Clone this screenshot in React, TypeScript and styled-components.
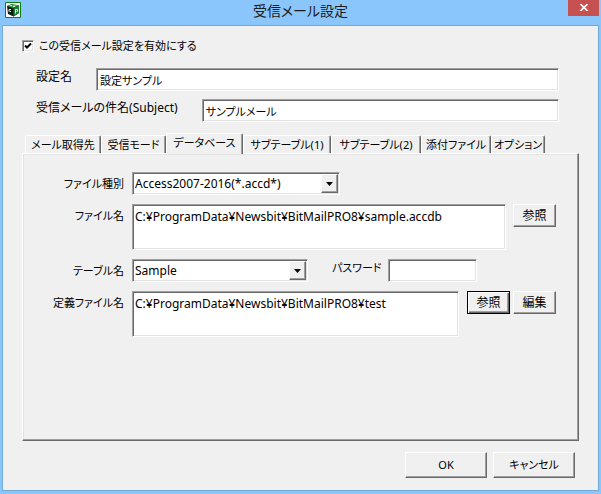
import React, { useState } from "react";
import styled, { createGlobalStyle, css } from "styled-components";

const GlobalStyle = createGlobalStyle`
  * { box-sizing: border-box; }
  body { margin: 0; }
  body, input, textarea, select, button {
    font-family: "Noto Sans", "Noto Sans CJK JP", sans-serif;
    font-size: 11px;
    line-height: 16px;
    font-feature-settings: "palt";
    color: #000;
  }
`;

const raised = css`
  border: 1px solid;
  border-color: #fff #696969 #696969 #fff;
  box-shadow: inset -1px -1px #a0a0a0;
`;

const sunken = css`
  border: 1px solid;
  border-color: #a0a0a0 #fff #fff #a0a0a0;
  box-shadow: inset 1px 1px #696969, inset -1px -1px #e3e3e3;
  background: #fff;
  border-radius: 0;
  outline: none;
`;

const Window = styled.main`
  display: flex;
  flex-direction: column;
  min-height: 100vh;
  padding: 0 2px 3px;
  background: #8ac6fb;
`;

const TitleBar = styled.header`
  display: grid;
  grid-template-columns: 32px 1fr 32px;
  align-items: start;
  height: 25px;
`;

const AppIcon = styled.svg`
  display: block;
  margin: 2px 0 0 3px;
`;

const Title = styled.h1`
  margin: 0;
  font-size: 14px;
  font-weight: 400;
  line-height: 22px;
  text-align: center;
  color: #1c1c1c;
`;

const CloseButton = styled.button`
  display: flex;
  align-items: center;
  justify-content: center;
  justify-self: end;
  width: 31px;
  height: 16px;
  padding: 0 0 2px;
  border: 0;
  background: #c75050;
`;

const Body = styled.form`
  display: flex;
  flex: 1;
  flex-direction: column;
  padding: 12px 19px 12px;
  border: 1px solid #72a9d9;
  background: #f0f0f0;
`;

const CheckLabel = styled.label`
  display: flex;
  align-items: center;
  gap: 5px;
  height: 16px;
`;

const CheckBox = styled.input`
  appearance: none;
  ${sunken}
  width: 12px;
  height: 12px;
  margin: 0;
  &:checked {
    background: #fff url("data:image/svg+xml,%3Csvg xmlns='http://www.w3.org/2000/svg' viewBox='0 0 12 12'%3E%3Cpath d='M3 5.5l2 2 4-4' fill='none' stroke='%23000' stroke-width='2'/%3E%3C/svg%3E") center / 12px 12px no-repeat;
  }
`;

const Field = styled.div<{ $top: number }>`
  display: flex;
  align-items: flex-start;
  gap: 24px;
  margin: ${(p) => p.$top}px 20px 0 14px;
`;

const FieldLabel = styled.label<{ $large?: boolean }>`
  padding-top: 1px;
  font-size: ${(p) => (p.$large ? 12 : 11)}px;
  white-space: nowrap;
`;

const TextInput = styled.input<{ $width?: number }>`
  ${sunken}
  ${(p) => (p.$width ? `width: ${p.$width}px;` : "flex: 1; min-width: 0;")}
  height: 23px;
  padding: 0 3px;
`;

const Tabs = styled.div`
  display: flex;
  align-items: flex-end;
  height: 20px;
  margin: 11px 0 0 3px;
`;

const Tab = styled.button<{ $width: number }>`
  width: ${(p) => p.$width}px;
  height: 18px;
  padding: 0;
  white-space: nowrap;
  border: 1px solid;
  border-color: #fff #696969 transparent #fff;
  border-bottom: 0;
  border-radius: 2px 2px 0 0;
  box-shadow: inset -1px 0 #a0a0a0;
  background: #f0f0f0;
  &[aria-selected="true"] {
    z-index: 1;
    height: 21px;
    margin-bottom: -1px;
    padding-bottom: 3px;
  }
`;

const Panel = styled.section`
  display: flex;
  flex: 1;
  flex-direction: column;
  min-height: 200px;
  padding: 18px 22px 20px 14px;
  ${raised}
  box-shadow: inset -1px -1px #a0a0a0, inset 1px 1px #e3e3e3;
`;

const Row = styled.div`
  display: grid;
  grid-template-columns: 87px 1fr;
  align-items: start;
  gap: 8px;
  margin-bottom: 9px;
`;

const RowLabel = styled.label`
  padding-top: 4px;
  text-align: right;
  white-space: nowrap;
`;

const Controls = styled.div`
  display: flex;
  align-items: flex-start;
`;

const Combo = styled.div<{ $width: number }>`
  position: relative;
  width: ${(p) => p.$width}px;
`;

const Select = styled.select`
  appearance: none;
  display: block;
  ${sunken}
  width: 100%;
  height: 23px;
  padding: 0 20px 0 2px;
  font-size: 12px;
`;

const Arrow = styled.span`
  position: absolute;
  top: 2px;
  right: 2px;
  bottom: 2px;
  display: flex;
  align-items: center;
  justify-content: center;
  width: 17px;
  ${raised}
  background: #f0f0f0;
  pointer-events: none;
`;

const TextArea = styled.textarea`
  ${sunken}
  flex: 1;
  min-width: 0;
  height: 46px;
  padding: 4px 2px;
  font-size: 12px;
  resize: none;
`;

const Button = styled.button<{ $wide?: boolean; $focused?: boolean }>`
  flex: none;
  width: ${(p) => (p.$wide ? 82 : 43)}px;
  height: ${(p) => (p.$wide ? 26 : 23)}px;
  padding: 0;
  font-size: ${(p) => (p.$wide ? 11 : 12)}px;
  background: #f0f0f0;
  ${raised}
  ${(p) =>
    p.$focused &&
    css`
      border-color: #000;
      box-shadow: inset 1px 1px #fff, inset -1px -1px #696969, inset -2px -2px #a0a0a0;
    `}
`;

const Group = styled.div<{ $gap: number; $left: number }>`
  display: flex;
  gap: ${(p) => p.$gap}px;
  margin-left: ${(p) => p.$left}px;
`;

const Footer = styled.footer`
  display: flex;
  justify-content: flex-end;
  gap: 6px;
  margin: 11px 4px 0 0;
`;

const tabs = [
  { name: "メール取得先", width: 76 },
  { name: "受信モード", width: 65 },
  { name: "データベース", width: 77 },
  { name: "サブテーブル(1)", width: 88 },
  { name: "サブテーブル(2)", width: 90 },
  { name: "添付ファイル", width: 70 },
  { name: "オプション", width: 54 },
];

function DropDown({ id, width, value }: { id: string; width: number; value: string }) {
  return (
    <Combo $width={width}>
      <Select id={id} defaultValue={value}>
        <option>{value}</option>
      </Select>
      <Arrow>
        <svg width="7" height="4" viewBox="0 0 7 4" aria-hidden="true">
          <path d="M0 0h7L3.5 4z" />
        </svg>
      </Arrow>
    </Combo>
  );
}

export default function App() {
  const [active, setActive] = useState("データベース");
  return (
    <Window>
      <GlobalStyle />
      <TitleBar>
        <AppIcon width="16" height="16" viewBox="0 0 16 16" aria-hidden="true">
          <path d="M.5.5h15v15H.5z" fill="#fff" stroke="#078307" />
          <path d="M2 4l5-2 7 1.500V11l-5.500 3.500L3 12z" fill="#0d1f12" />
          <path d="M2 4l5-2 7 1.500L8.500 6z" fill="#3f9a52" />
          <path d="M8.500 6L14 3.500V11l-5.500 3.500z" fill="#1f7a34" />
          <path d="M5 3.500h2M8.500 3h2M8 4.500h2" stroke="#c5e6ca" />
          <path d="M4 9.500v-2h2M4.500 9.500h1.500M10.500 11.500v-4h2v2h-1" fill="none" stroke="#e6f2e8" />
        </AppIcon>
        <Title>受信メール設定</Title>
        <CloseButton type="button" aria-label="閉じる">
          <svg width="8" height="7" viewBox="0 0 8 7" aria-hidden="true">
            <path d="M.5 0l7 7M7.500 0l-7 7" stroke="#fff" strokeWidth="1.600" />
          </svg>
        </CloseButton>
      </TitleBar>
      <Body onSubmit={(e) => e.preventDefault()}>
        <CheckLabel>
          <CheckBox type="checkbox" defaultChecked />
          この受信メール設定を有効にする
        </CheckLabel>
        <Field $top={14}>
          <FieldLabel htmlFor="name" $large>設定名</FieldLabel>
          <TextInput id="name" defaultValue="設定サンプル" />
        </Field>
        <Field $top={8}>
          <FieldLabel htmlFor="subject" $large>受信メールの件名(Subject)</FieldLabel>
          <TextInput id="subject" defaultValue="サンプルメール" />
        </Field>
        <Tabs role="tablist">
          {tabs.map((t) => (
            <Tab
              key={t.name}
              type="button"
              role="tab"
              aria-selected={t.name === active}
              $width={t.width}
              onClick={() => setActive(t.name)}
            >
              {t.name}
            </Tab>
          ))}
        </Tabs>
        <Panel role="tabpanel">
          <Row>
            <RowLabel htmlFor="type">ファイル種別</RowLabel>
            <DropDown id="type" width={208} value="Access2007-2016(*.accd*)" />
          </Row>
          <Row>
            <RowLabel htmlFor="file">ファイル名</RowLabel>
            <Controls>
              <TextArea id="file" defaultValue="C:¥ProgramData¥Newsbit¥BitMailPRO8¥sample.accdb" />
              <Group $gap={3} $left={7}>
                <Button type="button">参照</Button>
              </Group>
            </Controls>
          </Row>
          <Row>
            <RowLabel htmlFor="table">テーブル名</RowLabel>
            <Controls>
              <DropDown id="table" width={176} value="Sample" />
              <Group $gap={6} $left={24}>
                <FieldLabel htmlFor="password">パスワード</FieldLabel>
                <TextInput id="password" type="password" $width={89} />
              </Group>
            </Controls>
          </Row>
          <Row>
            <RowLabel htmlFor="definition">定義ファイル名</RowLabel>
            <Controls>
              <TextArea id="definition" defaultValue="C:¥ProgramData¥Newsbit¥BitMailPRO8¥test" />
              <Group $gap={3} $left={8}>
                <Button type="button" $focused>参照</Button>
                <Button type="button">編集</Button>
              </Group>
            </Controls>
          </Row>
        </Panel>
        <Footer>
          <Button type="submit" $wide>OK</Button>
          <Button type="button" $wide>キャンセル</Button>
        </Footer>
      </Body>
    </Window>
  );
}
